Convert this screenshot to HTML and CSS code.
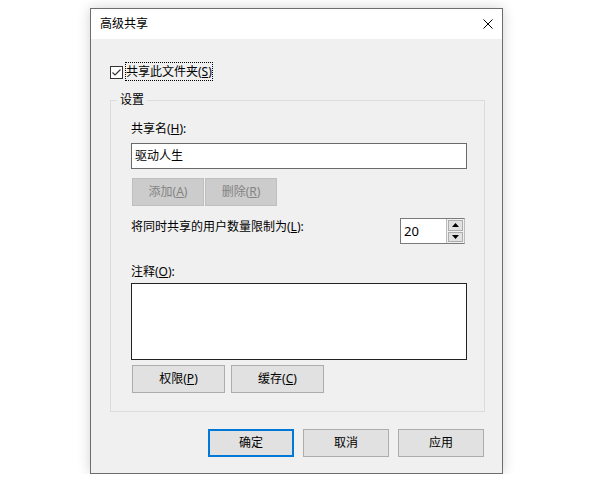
FILE: index.html
```html
<!DOCTYPE html>
<html lang="zh-CN">
<head>
    <meta charset="UTF-8">
    <title>高级共享</title>
    <link rel="stylesheet" href="styles.css">
</head>
<body>
    <div class="dialog">
        <div class="titlebar">
            <span class="title">高级共享</span>
            <span class="close">
                <svg width="10" height="10" viewBox="0 0 10 10"><path d="M0.5 0.5L9.5 9.5M9.5 0.5L0.5 9.5" stroke="#000" stroke-width="1"/></svg>
            </span>
        </div>

        <div class="content">
            <label class="check">
                <span class="box">
                    <svg width="11" height="11" viewBox="0 0 11 11"><path d="M1.5 5.5L4 8L9.5 2.5" fill="none" stroke="#333" stroke-width="1.2"/></svg>
                </span>
                <span class="focus">共享此文件夹(<u>S</u>)</span>
            </label>

            <div class="group">
                <span class="group-title">设置</span>

                <div class="label">共享名(<u>H</u>):</div>
                <div class="input">驱动人生</div>

                <div class="btn-row tight">
                    <span class="btn disabled small">添加(<u>A</u>)</span>
                    <span class="btn disabled small">删除(<u>R</u>)</span>
                </div>

                <div class="limit-row">
                    <div class="label">将同时共享的用户数量限制为(<u>L</u>):</div>
                    <div class="spin">
                        <span class="spin-value">20</span>
                        <span class="spin-arrows">
                            <span class="arrow"><svg width="7" height="4" viewBox="0 0 7 4"><path d="M3.5 0L7 4H0z" fill="#000"/></svg></span>
                            <span class="arrow"><svg width="7" height="4" viewBox="0 0 7 4"><path d="M0 0H7L3.5 4z" fill="#000"/></svg></span>
                        </span>
                    </div>
                </div>

                <div class="label note-label">注释(<u>O</u>):</div>
                <div class="textarea"></div>

                <div class="btn-row wide">
                    <span class="btn medium">权限(<u>P</u>)</span>
                    <span class="btn medium">缓存(<u>C</u>)</span>
                </div>
            </div>

            <div class="footer">
                <span class="btn default">确定</span>
                <span class="btn">取消</span>
                <span class="btn">应用</span>
            </div>
        </div>
    </div>
</body>
</html>
```

FILE: styles.css
```css
/* Windows style "advanced sharing" dialog */
body {
    margin: 0;
    background-color: #ffffff;
    font-family: "Noto Sans", "Noto Sans CJK SC", sans-serif;
    font-size: 12px;
    line-height: 16px;
    color: #000;
}
.dialog {
    box-sizing: border-box;
    width: 413px;
    height: 466px;
    margin: 8px 0 0 90px;
    background-color: #f0f0f0;
    border: 1px solid #6d6d6d;
    box-shadow: 0 0 12px rgba(0,0,0,0.18);
}
.titlebar {
    height: 30px;
    background-color: #ffffff;
    display: flex;
    align-items: center;
    justify-content: space-between;
    padding-left: 9px;
}
.close {
    width: 28px;
    display: flex;
    justify-content: center;
    align-items: center;
}
.close svg {
    display: block;
}
.content {
    padding: 0 17px 0 19px;
}

/* checkbox line */
.check {
    display: flex;
    align-items: center;
    margin-top: 23px;
    height: 19px;
}
.box {
    box-sizing: border-box;
    width: 13px;
    height: 13px;
    border: 1px solid #333;
    background-color: #fff;
    display: flex;
    align-items: center;
    justify-content: center;
    margin-top: 1px;
}
.box svg {
    display: block;
}
.focus {
    margin-left: 2px;
    padding: 1px 1px 1px 1px;
    outline: 1px dotted #000;
    outline-offset: -1px;
    line-height: 17px;
}

/* group box */
.group {
    position: relative;
    box-sizing: border-box;
    height: 312px;
    margin-top: 19px;
    border: 1px solid #dcdcdc;
    padding: 20px 17px 0 20px;
}
.group-title {
    position: absolute;
    top: -9px;
    left: 6px;
    padding: 0 3px;
    background-color: #f0f0f0;
}
.input {
    box-sizing: border-box;
    height: 26px;
    margin-top: 6px;
    border: 1px solid #6a6a6a;
    background-color: #fff;
    padding: 0 3px;
    line-height: 24px;
}
.btn-row {
    display: flex;
}
.tight {
    margin-top: 9px;
    padding-left: 1px;
    gap: 1px;
}
.wide {
    margin-top: 5px;
    padding-left: 1px;
    gap: 6px;
}
.limit-row {
    display: flex;
    justify-content: space-between;
    align-items: flex-start;
    margin-top: 12px;
}
.limit-row .label {
    margin-top: 1px;
}
.spin {
    box-sizing: border-box;
    width: 65px;
    height: 26px;
    margin-right: 2px;
    display: flex;
    border: 1px solid #7a7a7a;
    border-right-color: #bcbcbc;
    background-color: #fff;
}
.spin-value {
    flex: 1;
    padding-left: 3px;
    line-height: 24px;
    font-size: 13px;
}
.spin-arrows {
    width: 18px;
    display: flex;
    flex-direction: column;
    padding: 1px;
    gap: 1px;
    border-left: 1px solid #bcbcbc;
    background-color: #f0f0f0;
    box-sizing: border-box;
}
.arrow {
    flex: 1;
    display: flex;
    align-items: center;
    justify-content: center;
    background-color: #e1e1e1;
    border: 1px solid #adadad;
}
.arrow svg {
    display: block;
}
.note-label {
    margin-top: 20px;
}
.textarea {
    box-sizing: border-box;
    height: 77px;
    margin-top: 3px;
    border: 1px solid #222;
    background-color: #fff;
}

/* push buttons */
.btn {
    box-sizing: border-box;
    display: flex;
    align-items: center;
    justify-content: center;
    width: 86px;
    height: 28px;
    background-color: #e1e1e1;
    border: 1px solid #adadad;
}
.small {
    width: 72px;
}
.medium {
    width: 93px;
}
.disabled {
    background-color: #cccccc;
    border-color: #bfbfbf;
    color: #838383;
}
.default {
    border: 2px solid #0078d7;
}
.footer {
    display: flex;
    justify-content: flex-end;
    gap: 9px;
    margin-top: 17px;
    padding-right: 1px;
}
```
